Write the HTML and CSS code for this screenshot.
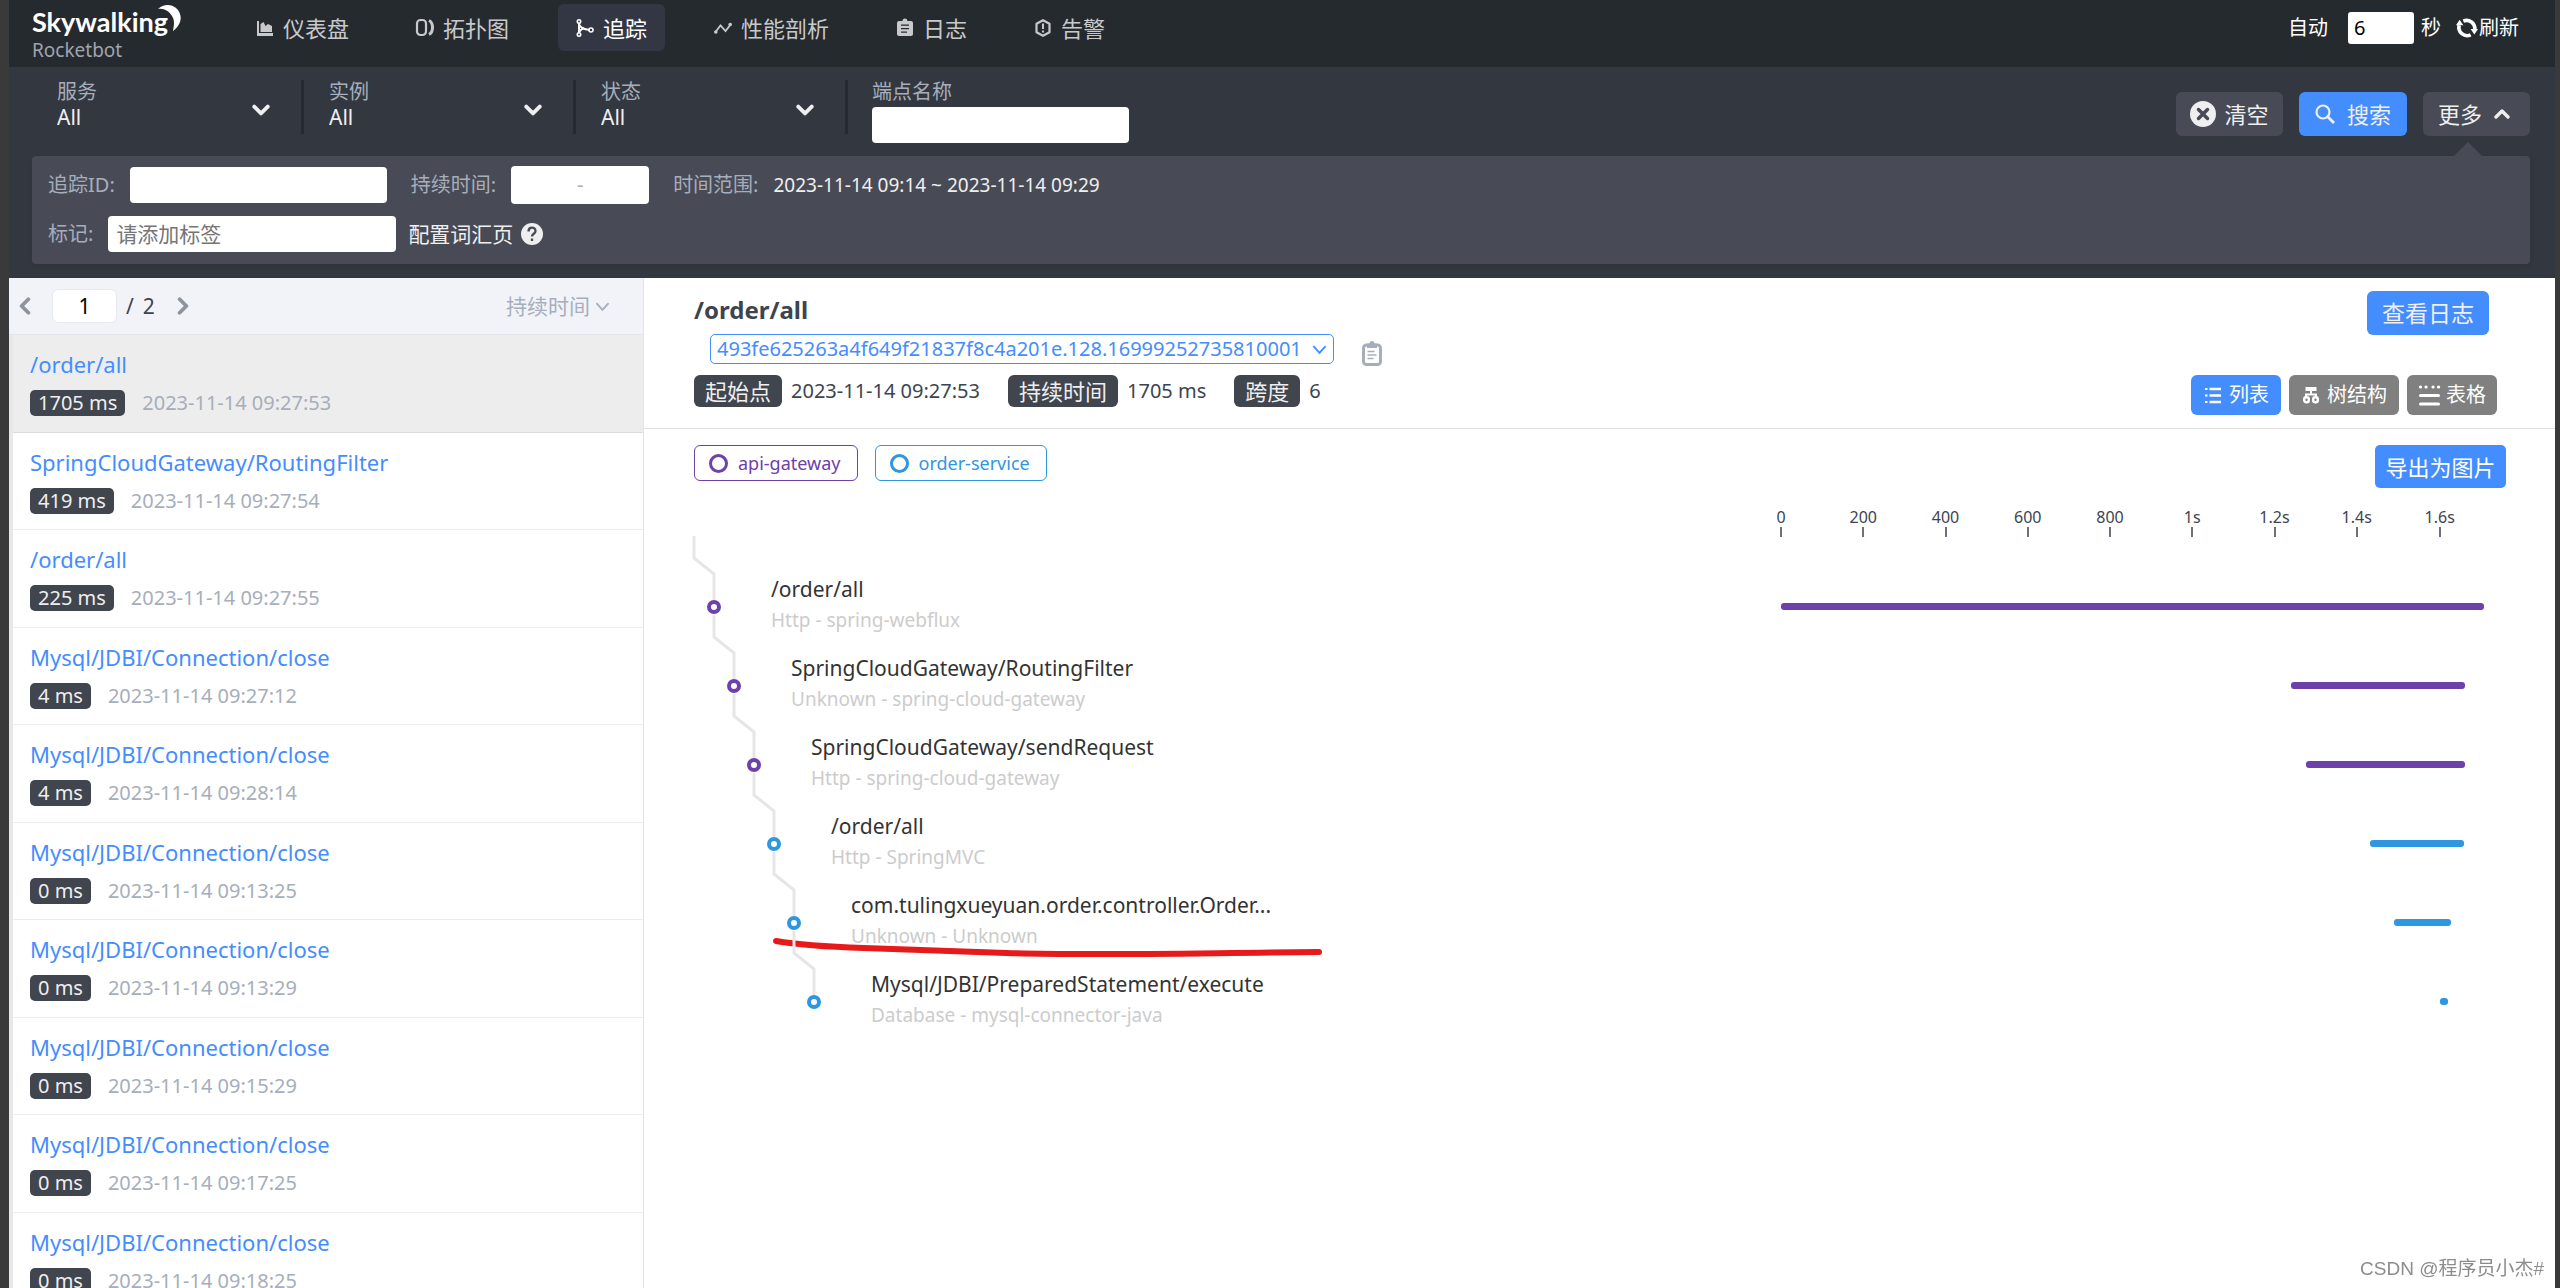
FILE: index.html
```html
<!DOCTYPE html>
<html lang="zh-CN">
<head>
<meta charset="utf-8">
<meta name="viewport" content="width=device-width, initial-scale=1">
<title>Skywalking Rocketbot</title>
<link rel="stylesheet" href="styles.css">
</head>
<body>
<svg class="sprite" aria-hidden="true">
  <symbol id="chevron" viewBox="0 0 16 16"><path d="M2 5l6 6 6-6" fill="none" stroke="currentColor" stroke-width="3.400" stroke-linecap="round" stroke-linejoin="round"/></symbol>
  <symbol id="chevron-thin" viewBox="0 0 16 16"><path d="M1.500 4.500l6.500 7 6.500-7" fill="none" stroke="currentColor" stroke-width="2"/></symbol>
</svg>
<header class="topbar">
  <a class="logo" href="#">
    <span class="logo-name">Skywalking</span>
    <svg class="logo-moon" viewBox="0 0 24 28" aria-hidden="true"><path d="M0 5C6-1 15 0 20 6c5 7 3 15-5 21 1-6 2-10-1-15C11 7 6 4 0 5z" fill="#fff"/></svg>
    <span class="logo-sub">Rocketbot</span>
  </a>
  <nav class="nav">
    <a class="nav-item" href="#"><svg class="icon" viewBox="0 0 18 18"><path d="M1 2h2v12h14v3H1z" fill="currentColor"/><path d="M4.500 13V5l3-2 2 4 2.500-2 4 2v6z" fill="currentColor"/></svg>仪表盘</a>
    <a class="nav-item" href="#"><svg class="icon" viewBox="0 0 18 18"><rect x="1" y="1" width="9" height="15" rx="3.500" fill="none" stroke="currentColor" stroke-width="2.200"/><path d="M13 1.500c2 1 3.500 3 3.500 7s-1.500 6-3.500 7" fill="none" stroke="currentColor" stroke-width="3"/></svg>拓扑图</a>
    <a class="nav-item active" href="#"><svg class="icon" viewBox="0 0 18 18"><g fill="none" stroke="currentColor" stroke-width="1.600"><circle cx="3" cy="2.500" r="1.700"/><circle cx="3" cy="15.500" r="1.700"/><circle cx="15" cy="11" r="2"/><path d="M3 4v10M3 5.500c2 4 6 5 10 5.300M3 13c1.500-2 3-3.500 5-3.500" stroke-width="2"/></g></svg>追踪</a>
    <a class="nav-item" href="#"><svg class="icon" viewBox="0 0 18 18"><path d="M1.500 13L6.500 6.500l5 5.500L17 5" fill="none" stroke="currentColor" stroke-width="1.800"/><circle cx="1.800" cy="13" r="1.800" fill="currentColor"/><circle cx="16.200" cy="5.500" r="1.800" fill="currentColor"/></svg>性能剖析</a>
    <a class="nav-item" href="#"><svg class="icon" viewBox="0 0 18 18"><path fill="currentColor" fill-rule="evenodd" d="M3 2h3.500a2.500 2.500 0 0 1 5 0H15a2 2 0 0 1 2 2v11a2 2 0 0 1-2 2H3a2 2 0 0 1-2-2V4a2 2 0 0 1 2-2zM5 5.500v1.200h8V5.500zM5 9v1.300h8V9zM5 12.500v1.300h6v-1.300z"/></svg>日志</a>
    <a class="nav-item" href="#"><svg class="icon" viewBox="0 0 18 18"><path d="M9 1.200l6.500 3.500v8.600L9 16.800l-6.500-3.500V4.700z" fill="none" stroke="currentColor" stroke-width="2.200" stroke-linejoin="round"/><path d="M9 4.500V10M9 11.500v2" stroke="currentColor" stroke-width="2"/></svg>告警</a>
  </nav>
  <div class="reload">
    <label for="auto">自动</label>
    <input id="auto" class="auto-input" type="text" value="6">
    <span>秒</span>
    <button class="reload-btn" type="button"><svg class="icon-reload" viewBox="0 0 24 24"><path d="M8 4.500a9 9 0 0 1 12.500 9M16 19.500A9 9 0 0 1 3.500 9" fill="none" stroke="currentColor" stroke-width="4"/><path d="M16 13h8l-4 6zM8 9H0l4-6z" fill="currentColor"/></svg>刷新</button>
  </div>
</header>

<section class="filters">
  <div class="filter-row">
    <div class="filter"><label for="svc">服务</label><select id="svc"><option>All</option></select><svg class="filter-caret"><use href="#chevron"/></svg></div>
    <div class="filter"><label for="ins">实例</label><select id="ins"><option>All</option></select><svg class="filter-caret"><use href="#chevron"/></svg></div>
    <div class="filter"><label for="sta">状态</label><select id="sta"><option>All</option></select><svg class="filter-caret"><use href="#chevron"/></svg></div>
    <div class="filter filter-text"><label for="ep">端点名称</label><input id="ep" class="field" type="text"></div>
    <div class="filter-actions">
      <button class="tool-btn" type="button"><svg class="icon-clear" viewBox="0 0 26 26"><circle cx="13" cy="13" r="13" fill="currentColor"/><path d="M8.500 8.500l9 9M17.500 8.500l-9 9" stroke="#484b56" stroke-width="3.500" stroke-linecap="round"/></svg>清空</button>
      <button class="tool-btn primary" type="button"><svg class="icon-search" viewBox="0 0 20 20"><circle cx="8" cy="8" r="6.500" fill="none" stroke="currentColor" stroke-width="2.200"/><path d="M12.500 12.500l6.500 6.500" stroke="currentColor" stroke-width="2.800"/></svg>搜索</button>
      <button class="tool-btn more" type="button">更多<svg class="icon-up"><use href="#chevron"/></svg></button>
    </div>
  </div>
  <div class="more-panel">
    <div class="panel-row">
      <label for="tid">追踪ID:</label><input id="tid" class="field" type="text">
      <span class="label">持续时间:</span><div class="duration"><input type="text" aria-label="最小"><span>-</span><input type="text" aria-label="最大"></div>
      <span class="label">时间范围:</span><span class="range">2023-11-14 09:14 ~ 2023-11-14 09:29</span>
    </div>
    <div class="panel-row">
      <label for="tag">标记:</label><input id="tag" class="field tag-field" type="text" placeholder="请添加标签">
      <a class="vocab" href="#">配置词汇页<svg class="icon-help" viewBox="0 0 22 22"><circle cx="11" cy="11" r="11" fill="#efefef"/><path d="M7.500 8.500c0-5 7-5 7-.5 0 3-3.500 2.500-3.500 5.500M11 15.500v2.500" fill="none" stroke="#484b56" stroke-width="2.300"/></svg></a>
    </div>
  </div>
</section>

<main class="content">
  <aside class="sidebar">
    <div class="pager">
      <button class="page-btn prev" type="button" aria-label="上一页"><svg><use href="#chevron"/></svg></button>
      <input class="page-input" type="text" value="1" aria-label="页码">
      <span class="page-total"><span>/</span><span>2</span></span>
      <button class="page-btn next" type="button" aria-label="下一页"><svg><use href="#chevron"/></svg></button>
      <div class="sort"><select aria-label="排序"><option>持续时间</option></select><svg><use href="#chevron-thin"/></svg></div>
    </div>
    <ul class="trace-list">
      <li class="trace selected"><a href="#">/order/all</a><div class="meta"><span class="badge">1705 ms</span><time>2023-11-14 09:27:53</time></div></li>
      <li class="trace"><a href="#">SpringCloudGateway/RoutingFilter</a><div class="meta"><span class="badge">419 ms</span><time>2023-11-14 09:27:54</time></div></li>
      <li class="trace"><a href="#">/order/all</a><div class="meta"><span class="badge">225 ms</span><time>2023-11-14 09:27:55</time></div></li>
      <li class="trace"><a href="#">Mysql/JDBI/Connection/close</a><div class="meta"><span class="badge">4 ms</span><time>2023-11-14 09:27:12</time></div></li>
      <li class="trace"><a href="#">Mysql/JDBI/Connection/close</a><div class="meta"><span class="badge">4 ms</span><time>2023-11-14 09:28:14</time></div></li>
      <li class="trace"><a href="#">Mysql/JDBI/Connection/close</a><div class="meta"><span class="badge">0 ms</span><time>2023-11-14 09:13:25</time></div></li>
      <li class="trace"><a href="#">Mysql/JDBI/Connection/close</a><div class="meta"><span class="badge">0 ms</span><time>2023-11-14 09:13:29</time></div></li>
      <li class="trace"><a href="#">Mysql/JDBI/Connection/close</a><div class="meta"><span class="badge">0 ms</span><time>2023-11-14 09:15:29</time></div></li>
      <li class="trace"><a href="#">Mysql/JDBI/Connection/close</a><div class="meta"><span class="badge">0 ms</span><time>2023-11-14 09:17:25</time></div></li>
      <li class="trace"><a href="#">Mysql/JDBI/Connection/close</a><div class="meta"><span class="badge">0 ms</span><time>2023-11-14 09:18:25</time></div></li>
    </ul>
  </aside>

  <section class="detail">
    <header class="detail-head">
      <div class="head-info">
        <h1>/order/all</h1>
        <div class="trace-id">
          <div class="id-select"><select aria-label="追踪ID"><option>493fe625263a4f649f21837f8c4a201e.128.16999252735810001</option></select><svg><use href="#chevron-thin"/></svg></div>
          <button class="copy" type="button" aria-label="复制"><svg viewBox="0 0 20 25"><rect x="1.500" y="4" width="17" height="19.500" rx="3" fill="none" stroke="currentColor" stroke-width="3"/><path d="M5 2.500h2.500a2.500 2.500 0 0 1 5 0H15V7H5z" fill="currentColor"/><path d="M5.500 10.500h7M5.500 14h9M5.500 17.500h6" stroke="currentColor" stroke-width="1.600"/></svg></button>
        </div>
        <div class="facts">
          <span class="tag">起始点</span><span class="fact">2023-11-14 09:27:53</span>
          <span class="tag">持续时间</span><span class="fact">1705 ms</span>
          <span class="tag">跨度</span><span class="fact">6</span>
        </div>
      </div>
      <div class="head-actions">
        <button class="log-btn" type="button">查看日志</button>
        <div class="views">
          <button class="view on" type="button"><svg class="icon-view" viewBox="0 0 16 17"><path d="M4.500 2H16M4.500 8.500H16M4.500 15H16" stroke="currentColor" stroke-width="2.600"/><path d="M0 2h2.500M0 8.500h2.500M0 15h2.500" stroke="currentColor" stroke-width="2.200"/></svg>列表</button>
          <button class="view" type="button"><svg class="icon-view" viewBox="0 0 16 17"><path d="M2.500 0h11v4h-11zM7 4h2v3H7z" fill="currentColor"/><path d="M3 10V7.500h10V10" fill="none" stroke="currentColor" stroke-width="2"/><rect x="1.200" y="10.200" width="4.600" height="5" rx="2" fill="none" stroke="currentColor" stroke-width="2.400"/><rect x="10.200" y="10.200" width="4.600" height="5" rx="2" fill="none" stroke="currentColor" stroke-width="2.400"/></svg>树结构</button>
          <button class="view wide" type="button"><svg class="icon-table" viewBox="0 0 21 21"><path d="M1.500 2h.1M7 2h.1M14 2h.1M19.500 2h.1" stroke="currentColor" stroke-width="3.200" stroke-linecap="round"/><path d="M1.500 10.500h18M1.500 19h18" stroke="currentColor" stroke-width="3" stroke-linecap="round"/></svg>表格</button>
        </div>
      </div>
    </header>

    <div class="chart">
      <div class="chart-top">
        <span class="chip gateway"><i></i>api-gateway</span>
        <span class="chip order"><i></i>order-service</span>
        <button class="export" type="button">导出为图片</button>
      </div>
      <div class="axis">
        <div class="ticks">
          <span style="left:0%">0</span><span style="left:11.7%">200</span><span style="left:23.4%">400</span><span style="left:35.1%">600</span><span style="left:46.8%">800</span><span style="left:58.5%">1s</span><span style="left:70.2%">1.2s</span><span style="left:81.9%">1.4s</span><span style="left:93.7%">1.6s</span>
        </div>
      </div>
      <ol class="spans">
        <li class="span gateway"><div class="node"><svg><path d="M0-31V-9L20 7V33"/><circle cx="20" cy="40" r="5"/></svg><div class="span-text"><b>/order/all</b><small>Http - spring-webflux</small></div></div><div class="track"><i style="left:0%;width:100%"></i></div></li>
        <li class="span gateway"><div class="node"><svg><path d="M0-31V-9L20 7V33"/><circle cx="20" cy="40" r="5"/></svg><div class="span-text"><b>SpringCloudGateway/RoutingFilter</b><small>Unknown - spring-cloud-gateway</small></div></div><div class="track"><i style="left:72.6%;width:24.7%"></i></div></li>
        <li class="span gateway"><div class="node"><svg><path d="M0-31V-9L20 7V33"/><circle cx="20" cy="40" r="5"/></svg><div class="span-text"><b>SpringCloudGateway/sendRequest</b><small>Http - spring-cloud-gateway</small></div></div><div class="track"><i style="left:74.7%;width:22.6%"></i></div></li>
        <li class="span order"><div class="node"><svg><path d="M0-31V-9L20 7V33"/><circle cx="20" cy="40" r="5"/></svg><div class="span-text"><b>/order/all</b><small>Http - SpringMVC</small></div></div><div class="track"><i style="left:83.8%;width:13.4%"></i></div></li>
        <li class="span order"><div class="node"><svg><path d="M0-31V-9L20 7V33"/><circle cx="20" cy="40" r="5"/></svg><div class="span-text"><b>com.tulingxueyuan.order.controller.Order...</b><small>Unknown - Unknown</small></div></div><div class="track"><i style="left:87.2%;width:8.1%"></i></div>
          <svg class="marker" viewBox="0 0 640 80"><path d="M82 58C105 62 140 64 170 65S231 67 312 70S500 70 625 69"/></svg></li>
        <li class="span order"><div class="node"><svg><path d="M0-31V-9L20 7V33"/><circle cx="20" cy="40" r="5"/></svg><div class="span-text"><b>Mysql/JDBI/PreparedStatement/execute</b><small>Database - mysql-connector-java</small></div></div><div class="track"><i style="left:93.7%;width:1.2%"></i></div></li>
      </ol>
    </div>
  </section>
</main>
<div class="watermark">CSDN @程序员小杰#</div>
</body>
</html>
```
FILE: styles.css
```css
* { box-sizing: border-box; }

body {
  margin: 0;
  height: 100vh;
  display: flex;
  flex-direction: column;
  overflow: hidden;
  border: 0 solid #3a3a3a;
  border-width: 0 5px 0 9px;
  background: #fff;
  color: #3d444f;
  font: 20px/26px "Noto Sans", "Noto Sans CJK SC", sans-serif;
}

button, input, select { font: inherit; color: inherit; border: 0; margin: 0; padding: 0; outline: 0; }
button { display: flex; align-items: center; justify-content: center; background: none; cursor: pointer; }
select { appearance: none; background: none; }
a { color: inherit; text-decoration: none; }
svg { display: block; flex: none; overflow: visible; }
ul, ol { list-style: none; margin: 0; padding: 0; }
.sprite { position: absolute; width: 0; height: 0; }

/* Top bar */
.topbar { flex: none; display: flex; align-items: flex-start; height: 67px; padding: 4px 36px 0 23px; background: #252a2f; color: #fff; }
.logo { width: 206px; display: grid; grid-template-columns: auto 1fr; line-height: 20px; }
.logo-name { font: bold 27px/36px Lato, sans-serif; }
.logo-moon { width: 24px; height: 28px; margin-left: -10px; }
.logo-sub { grid-column: 1 / 3; font-size: 19px; color: #9ea4ad; }
.nav { display: flex; gap: 31px; font-size: 22px; color: #c8c9cc; }
.nav-item { display: flex; align-items: center; gap: 9px; height: 47px; padding: 0 18px; border-radius: 6px; }
.nav-item.active { background: #333744; color: #fff; }
.icon { width: 18px; height: 18px; }
.reload { display: flex; align-items: center; height: 47px; margin-left: auto; }
.auto-input { width: 66px; height: 32px; margin: 0 7px 0 20px; padding-left: 6px; border-radius: 3px; background: #fff; color: #000; }
.reload-btn { margin-left: 14px; }
.icon-reload { width: 24px; height: 22px; }

/* Filters */
.filters { flex: none; padding: 13px 25px 14px 23px; background: #333840; color: #efefef; }
.filter-row { display: flex; height: 76px; }
.filter { position: relative; width: 272px; height: 54px; padding-left: 25px; border-right: 3px solid #262a30; }
.filter label { display: block; color: #a7aebb; line-height: 24px; }
.filter select { display: block; width: 230px; height: 26px; font-size: 21px; line-height: 26px; }
.filter-caret { position: absolute; right: 31px; top: 21px; width: 18px; height: 18px; }
.filter-text { width: auto; border: 0; padding-left: 24px; }
.field { width: 257px; height: 36px; border-radius: 4px; padding: 0 8px; background: #fff; color: #333; }
.filter-text .field { margin-top: 3px; }
.filter-actions { display: flex; gap: 16px; margin: 12px 0 0 auto; height: 44px; }
.tool-btn { min-width: 107px; gap: 8px; border-radius: 6px; background: #484b56; font-size: 22px; }
.tool-btn.primary { min-width: 108px; background: #448dfe; gap: 12px; }
.tool-btn.more { position: relative; gap: 12px; padding-right: 5px; }
.tool-btn.more::after { content: ""; position: absolute; bottom: -20px; left: 31px; border: 14px solid transparent; border-top: 0; border-bottom-color: #484b56; }
.icon-clear { width: 26px; height: 26px; }
.icon-search { width: 20px; height: 20px; }
.icon-up { width: 16px; height: 16px; transform: rotate(180deg); }
.more-panel { display: grid; gap: 12px; padding: 10px 16px 12px; border-radius: 4px; background: #484b56; box-shadow: 0 2px 4px rgba(0, 0, 0, .1); }
.panel-row { display: flex; align-items: center; }
.panel-row label, .label { color: #a7aebb; margin-right: 15px; }
.panel-row .field + .label { margin-left: 24px; }
.duration { display: flex; align-items: center; width: 138px; height: 38px; margin-right: 24px; border-radius: 4px; background: #fff; color: #a7aebb; }
.duration input { flex: 1; width: 0; background: none; }
.range { font-size: 19px; }
.panel-row .tag-field { width: 288px; font-size: 21px; }
.tag-field::placeholder { color: #757575; opacity: 1; }
.vocab { display: flex; align-items: center; gap: 8px; margin-left: 12px; font-size: 21px; }
.icon-help { width: 22px; height: 22px; }

/* Trace list */
.content { flex: 1; min-height: 0; display: flex; }
.sidebar { flex: 0 0 635px; display: flex; flex-direction: column; border-right: 1px solid #e2e4e8; }
.pager { flex: none; display: flex; align-items: center; height: 57px; padding: 0 33px 0 6px; border-bottom: 1px solid #e3e5ec; background: #f2f3f9; }
.page-btn { width: 20px; height: 32px; color: #8e949e; }
.page-btn svg { width: 18px; height: 18px; }
.prev svg { transform: rotate(90deg); }
.next svg { transform: rotate(-90deg); }
.page-input { width: 65px; height: 34px; margin: 0 9px 0 17px; border: 1px solid #e8e9ee; border-radius: 6px; background: #fff; color: #000; text-align: center; font-size: 21px; }
.page-total { display: flex; gap: 9px; font-size: 21px; margin-right: 18px; }
.sort { display: flex; align-items: center; gap: 5px; margin-left: auto; color: #a7aebb; font-size: 21px; }
.sort svg, .id-select svg { width: 15px; height: 15px; }
.trace-list { flex: 1; overflow-y: auto; scrollbar-width: none; border-left: 4px solid #e8e8e8; }
.trace { height: 98px; padding: 13px 17px 0; border-bottom: 1px solid #ececec; }
.trace:nth-child(even) { height: 97px; }
.trace.selected { background: #ededed; border-color: #dcdcdc; }
.trace a { display: block; margin-bottom: 10px; color: #448dfe; font-size: 22px; line-height: 32px; }
.meta { display: flex; gap: 17px; }
.meta time { color: #a7aebb; }
.badge { padding: 0 8px; border-radius: 5px; background: #40454e; color: #efefef; }

/* Trace detail */
.detail { flex: 1; min-width: 0; }
.detail-head { display: flex; justify-content: space-between; height: 151px; padding: 13px 58px 0 50px; border-bottom: 1px solid #e2e2e2; }
h1 { margin: 0; font-size: 24px; line-height: 38px; }
.trace-id { display: flex; align-items: center; gap: 28px; height: 40px; margin-left: 16px; }
.id-select { display: flex; align-items: center; gap: 10px; height: 30px; padding: 0 6px; border: 1px solid #448dfe; border-radius: 5px; color: #448dfe; }
.copy { color: #a7aebb; margin-top: 8px; }
.copy svg { width: 20px; height: 25px; }
.facts { display: flex; align-items: center; margin-top: 6px; }
.tag { padding: 0 11px; border-radius: 6px; background: #40454e; color: #efefef; font-size: 22px; line-height: 32px; }
.fact { margin: 0 28px 0 9px; }
.head-actions { display: flex; flex-direction: column; align-items: flex-end; gap: 40px; }
.log-btn { width: 122px; height: 44px; margin-right: 8px; border-radius: 6px; background: #448dfe; color: #efefef; font-size: 23px; }
.views { display: flex; gap: 8px; }
.view { gap: 8px; height: 40px; padding: 0 12px 0 14px; border-radius: 6px; background: #808080; color: #fff; }
.view.on { background: #448dfe; }
.view.wide { gap: 6px; padding: 0 11px 0 12px; }
.icon-view { width: 16px; height: 17px; }
.icon-table { width: 21px; height: 21px; }

.gateway { --c: #6e40aa; }
.order { --c: #2f96e0; }
.chart { padding: 16px 71px 0 50px; }
.chart-top { display: flex; align-items: flex-start; gap: 17px; height: 63px; }
.chip { display: flex; align-items: center; gap: 10px; height: 36px; padding: 0 16px 0 14px; border: 1px solid var(--c); border-radius: 6px; color: var(--c); font-size: 18px; }
.chip i { width: 19px; height: 19px; border: 3px solid var(--c); border-radius: 50%; }
.export { width: 131px; height: 43px; margin: 0 -22px 0 auto; border-radius: 5px; background: #448dfe; color: #fff; font-size: 22px; }
.axis, .span { display: grid; grid-template-columns: minmax(0, 1087fr) minmax(0, 703fr); }
.axis { height: 59px; }
.ticks { position: relative; grid-column: 2; }
.ticks span { position: absolute; width: 60px; margin-left: -30px; text-align: center; font-size: 16px; line-height: 18px; color: #3d444f; }
.ticks span::after { content: ""; display: block; width: 2px; height: 10px; margin: 1px auto 0; background: #6b727c; }
.span { position: relative; height: 79px; }
.node { display: flex; padding-left: var(--indent, 0); }
.span:nth-child(2) { --indent: 20px; }
.span:nth-child(3) { --indent: 40px; }
.span:nth-child(4) { --indent: 60px; }
.span:nth-child(5) { --indent: 80px; }
.span:nth-child(6) { --indent: 100px; }
.node svg { width: 77px; height: 79px; fill: none; }
.node path { stroke: #e6e6e6; stroke-width: 3px; }
.node circle { stroke: var(--c); stroke-width: 4px; fill: #fff; }
.span-text b { display: block; padding-top: 6px; font-weight: normal; font-size: 21px; line-height: 32px; color: #333; white-space: nowrap; }
.span-text small { display: block; font-size: 19px; line-height: 30px; color: #ccc; white-space: nowrap; }
.track { position: relative; }
.track i { position: absolute; top: 36px; height: 7px; border-radius: 3px; background: var(--c); }
.marker { position: absolute; left: 0; top: 0; width: 640px; height: 80px; fill: none; stroke: #e61a1a; stroke-width: 6px; stroke-linecap: round; pointer-events: none; }
.watermark { position: fixed; right: 16px; bottom: 6px; color: #8c8c8c; font-size: 19px; font-family: "Liberation Sans", "Noto Sans CJK SC", sans-serif; }
```
